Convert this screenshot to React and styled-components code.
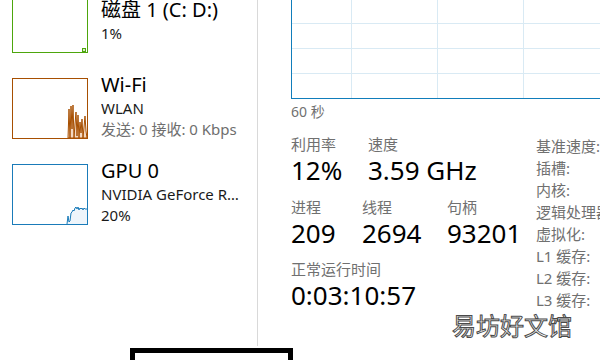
import React from 'react';
import styled, { createGlobalStyle } from 'styled-components';

const GlobalStyle = createGlobalStyle`
  html, body {
    margin: 0;
    padding: 0;
    background: #fff;
    overflow: hidden;
  }

  body {
    width: 600px;
    height: 360px;
    font-family: 'Noto Sans', 'Noto Sans CJK SC', sans-serif;
  }
`;

const devices = [
  { title: '磁盘 1 (C: D:)', color: '#4da60c', lines: [{ text: '1%' }], chart: 'disk' },
  {
    title: 'Wi-Fi',
    color: '#a74f01',
    lines: [{ text: 'WLAN' }, { text: '发送: 0 接收: 0 Kbps', muted: true }],
    chart: 'wifi',
  },
  {
    title: 'GPU 0',
    color: '#1a7bb9',
    lines: [{ text: 'NVIDIA GeForce RTX 3060 Laptop GPU' }, { text: '20%' }],
    chart: 'gpu',
  },
];

const specs = ['基准速度:', '插槽:', '内核:', '逻辑处理器:', '虚拟化:', 'L1 缓存:', 'L2 缓存:', 'L3 缓存:'];

function ThumbChart({ type }) {
  if (type === 'disk') {
    return (
      <svg width="74" height="59" viewBox="0 0 74 59">
        <rect x="69.5" y="55.5" width="3" height="3" fill="#dbedcf" stroke="#4da60c" />
      </svg>
    );
  }
  if (type === 'wifi') {
    return (
      <svg width="74" height="59" viewBox="0 0 74 59">
        <polygon
          points="55,59 56,30 57,59 58,27 59,50 60,26 61,59 62,45 63,33 64,57 65,36 66,59 67,43 68,54 69,40 70,59 71,48 72,37 73,52 74,59"
          fill="rgba(214,126,52,0.3)"
          stroke="#a74f01"
          strokeWidth="1"
        />
      </svg>
    );
  }
  return (
    <svg width="74" height="59" viewBox="0 0 74 59">
      <polygon
        points="54,59 55,51 56,57 57,56 58,48 59,47 60,45 61,46 62,43 63,42 64,44 65,42 66,45 67,43 68,44 69,43 70,45 71,43 72,44 74,44 74,59"
        fill="#eef5fb"
        stroke="none"
      />
      <polyline
        points="54,59 55,51 56,57 57,56 58,48 59,47 60,45 61,46 62,43 63,42 64,44 65,42 66,45 67,43 68,44 69,43 70,45 71,43 72,44 74,44"
        fill="none"
        stroke="#1a7bb9"
        strokeWidth="1"
      />
    </svg>
  );
}

function CpuGraph() {
  return (
    <svg width="400" height="98" viewBox="0 0 400 98">
      {[59, 145, 231, 317].map((x) => (
        <line key={`v-${x}`} x1={x + 0.5} y1="0" x2={x + 0.5} y2="98" stroke="#d9eaf4" />
      ))}
      {[23, 48, 73].map((y) => (
        <line key={`h-${y}`} x1="0" y1={y + 0.5} x2="400" y2={y + 0.5} stroke="#d9eaf4" />
      ))}
    </svg>
  );
}

function App() {
  return (
    <>
      <GlobalStyle />
      <Page>
        <Sidebar>
          <DeviceList>
            {devices.map((device) => (
              <DeviceItem key={device.title}>
                <Thumb $color={device.color}>
                  <ThumbChart type={device.chart} />
                </Thumb>
                <Info>
                  <DeviceTitle>{device.title}</DeviceTitle>
                  {device.lines.map((line) => (
                    <DeviceLine key={line.text} $muted={line.muted}>
                      {line.text}
                    </DeviceLine>
                  ))}
                </Info>
              </DeviceItem>
            ))}
          </DeviceList>
        </Sidebar>

        <Detail>
          <Graph>
            <CpuGraph />
          </Graph>
          <AxisLabel>60 秒</AxisLabel>

          <StatsArea>
            <MainStats>
              <StatRow>
                <Stat $width={77}>
                  <StatLabel>利用率</StatLabel>
                  <StatValue>12%</StatValue>
                </Stat>
                <Stat>
                  <StatLabel>速度</StatLabel>
                  <StatValue>3.59 GHz</StatValue>
                </Stat>
              </StatRow>
              <StatRow>
                <Stat $width={71}>
                  <StatLabel>进程</StatLabel>
                  <StatValue>209</StatValue>
                </Stat>
                <Stat $width={85}>
                  <StatLabel>线程</StatLabel>
                  <StatValue>2694</StatValue>
                </Stat>
                <Stat>
                  <StatLabel>句柄</StatLabel>
                  <StatValue>93201</StatValue>
                </Stat>
              </StatRow>
              <StatRow>
                <Stat>
                  <StatLabel>正常运行时间</StatLabel>
                  <StatValue>0:03:10:57</StatValue>
                </Stat>
              </StatRow>
            </MainStats>

            <SpecList>
              {specs.map((spec) => (
                <SpecItem key={spec}>{spec}</SpecItem>
              ))}
            </SpecList>
          </StatsArea>
        </Detail>

        <Watermark>易坊好文馆</Watermark>
        <FocusFrame />
      </Page>
    </>
  );
}

export default App;

const Page = styled.div`
  position: relative;
  display: flex;
  width: 600px;
  height: 360px;
  overflow: hidden;
`;

const Sidebar = styled.div`
  flex-shrink: 0;
  width: 257px;
  height: 346px;
  border-right: 1px solid #d9d9d9;
  overflow: hidden;
`;

// list is scrolled a little, the disk card is cut at the top
const DeviceList = styled.div`
  margin-top: -8px;
  padding-left: 12px;
`;

const DeviceItem = styled.div`
  display: flex;
  align-items: center;
  gap: 13px;
  height: 61px;
  margin-bottom: 25px;
`;

const Thumb = styled.div`
  flex-shrink: 0;
  box-sizing: border-box;
  width: 76px;
  height: 61px;
  border: 1px solid ${(props) => props.$color};
  background: #fff;

  svg {
    display: block;
  }
`;

const Info = styled.div`
  display: flex;
  flex-direction: column;
  width: 145px;
  padding-bottom: 6px;
`;

const DeviceTitle = styled.div`
  color: #000;
  font-size: 20px;
  line-height: 27px;
  white-space: nowrap;
`;

const DeviceLine = styled.div`
  overflow: hidden;

  color: ${(props) => (props.$muted ? '#6e6e6e' : '#1a1a1a')};
  font-size: 15px;
  line-height: 21px;
  white-space: nowrap;
  text-overflow: ellipsis;
`;

const Detail = styled.div`
  flex-shrink: 0;
  width: 400px;
  padding-left: 33px;
`;

const Graph = styled.div`
  width: 400px;
  margin-top: -1px;
  border: 1px solid #117dbb;

  svg {
    display: block;
  }
`;

const AxisLabel = styled.div`
  margin-top: 3px;

  color: #707070;
  font-size: 14px;
  line-height: 20px;
`;

const StatsArea = styled.div`
  display: flex;
  margin-top: 12px;
`;

const MainStats = styled.div`
  display: flex;
  flex-direction: column;
  gap: 10.5px;
  width: 245px;
`;

const StatRow = styled.div`
  display: flex;
`;

const Stat = styled.div`
  display: flex;
  flex-direction: column;
  width: ${(props) => (props.$width ? `${props.$width}px` : 'auto')};
`;

const StatLabel = styled.div`
  color: #707070;
  font-size: 15px;
  line-height: 20px;
  white-space: nowrap;
`;

const StatValue = styled.div`
  color: #000;
  font-size: 26px;
  line-height: 32px;
  white-space: nowrap;
`;

const SpecList = styled.div`
  display: flex;
  flex-direction: column;
  padding-top: 1px;
`;

const SpecItem = styled.div`
  color: #707070;
  font-size: 15px;
  line-height: 22px;
  white-space: nowrap;
`;

const Watermark = styled.div`
  position: absolute;
  top: 313px;
  left: 452px;

  color: #f7f7f7;
  font-family: 'Noto Sans CJK SC', sans-serif;
  font-size: 24px;
  line-height: 24px;
  -webkit-text-stroke: 1px #4a4a4a;
  white-space: nowrap;
`;

const FocusFrame = styled.div`
  position: absolute;
  top: 348px;
  left: 130px;

  box-sizing: border-box;
  width: 163px;
  height: 40px;
  border: 5px solid #000;
`;
